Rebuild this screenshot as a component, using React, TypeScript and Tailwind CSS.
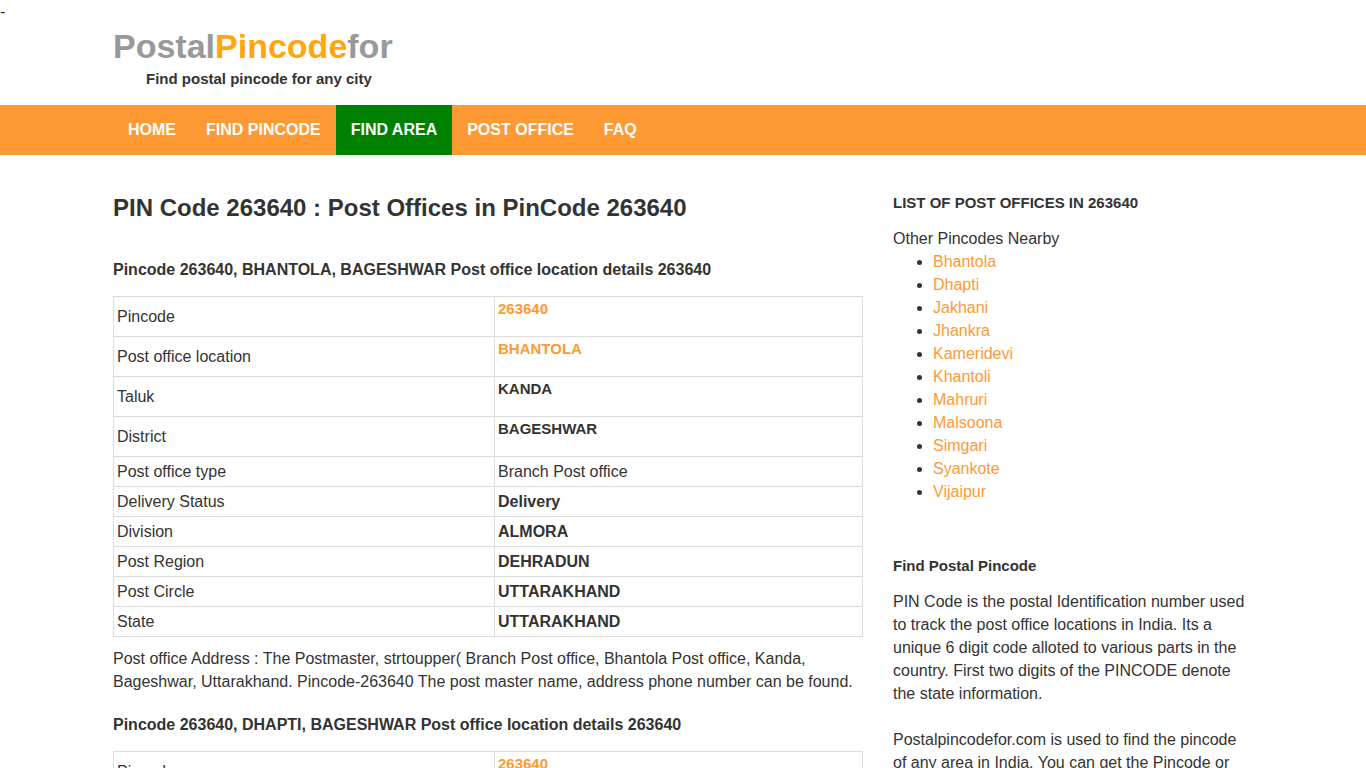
import React from 'react';

interface Row {
  label: string;
  value: string;
  kind: 'link' | 'heading' | 'plain' | 'bold';
}

interface Office {
  name: string;
  title: string;
}

const NAV = ['Home', 'Find Pincode', 'Find Area', 'Post Office', 'FAQ'];

const OFFICES: Office[] = [
  { name: 'BHANTOLA', title: 'Bhantola' },
  { name: 'DHAPTI', title: 'Dhapti' },
];

const NEARBY = [
  'Bhantola',
  'Dhapti',
  'Jakhani',
  'Jhankra',
  'Kameridevi',
  'Khantoli',
  'Mahruri',
  'Malsoona',
  'Simgari',
  'Syankote',
  'Vijaipur',
];

const rowsFor = (office: Office): Row[] => [
  { label: 'Pincode', value: '263640', kind: 'link' },
  { label: 'Post office location', value: office.name, kind: 'link' },
  { label: 'Taluk', value: 'KANDA', kind: 'heading' },
  { label: 'District', value: 'BAGESHWAR', kind: 'heading' },
  { label: 'Post office type', value: 'Branch Post office', kind: 'plain' },
  { label: 'Delivery Status', value: 'Delivery', kind: 'bold' },
  { label: 'Division', value: 'ALMORA', kind: 'bold' },
  { label: 'Post Region', value: 'DEHRADUN', kind: 'bold' },
  { label: 'Post Circle', value: 'UTTARAKHAND', kind: 'bold' },
  { label: 'State', value: 'UTTARAKHAND', kind: 'bold' },
];

const CellValue: React.FC<{ row: Row }> = ({ row }) => {
  if (row.kind === 'plain') return <>{row.value}</>;
  if (row.kind === 'bold') return <strong>{row.value}</strong>;
  return (
    <h5 className="mb-4 text-[15px] leading-[17px] font-bold">
      {row.kind === 'link' ? (
        <a href="#" className="text-[#ff9933]">{row.value}</a>
      ) : (
        row.value
      )}
    </h5>
  );
};

const OfficeDetails: React.FC<{ office: Office }> = ({ office }) => (
  <section className="mb-[22px]">
    <h2 className="mb-4 text-base leading-5 font-bold">
      Pincode 263640, {office.name}, BAGESHWAR Post office location details 263640
    </h2>
    <table className="w-full table-fixed border-collapse border border-[#dddddd]">
      <colgroup>
        <col className="w-[381px]" />
        <col />
      </colgroup>
      <tbody>
        {rowsFor(office).map((row) => (
          <tr key={row.label}>
            <th scope="row" className="border border-[#dddddd] p-[3px] text-left align-middle font-normal">
              {row.label}
            </th>
            <td className="border border-[#dddddd] p-[3px] align-middle">
              <CellValue row={row} />
            </td>
          </tr>
        ))}
      </tbody>
    </table>
    <p className="mt-[10px]">
      Post office Address : The Postmaster, strtoupper( Branch Post office, {office.title} Post office, Kanda,
      Bageshwar, Uttarakhand. Pincode-263640 The post master name, address phone number can be found.
    </p>
  </section>
);

const App: React.FC = () => {
  return (
    <div className="min-h-screen bg-white font-['Liberation_Sans',Arial,sans-serif] text-base leading-[23px] text-[#333333]">
      <div>-</div>

      {/* Logo */}
      <header className="mx-auto max-w-[1170px] px-[15px] pt-1 pb-[18px]">
        <a href="#" className="block text-[34px] leading-[39px] font-bold text-[#999999]">
          Postal<span className="text-[#ffa60d]">Pincode</span>for
        </a>
        <p className="pt-1 pl-[33px] text-[15px] leading-[17px] font-bold">Find postal pincode for any city</p>
      </header>

      {/* Navigation */}
      <nav className="bg-[#ff9933]">
        <ul className="mx-auto flex max-w-[1170px] flex-wrap px-[15px]">
          {NAV.map((item) => (
            <li key={item}>
              <a
                href="#"
                className={`block p-[15px] leading-5 font-bold text-white uppercase ${
                  item === 'Find Area' ? 'bg-[#008000]' : ''
                }`}
              >
                {item}
              </a>
            </li>
          ))}
        </ul>
      </nav>

      <div className="mx-auto grid max-w-[1170px] grid-cols-1 pt-[39px] md:grid-cols-3">
        <main className="px-[15px] md:col-span-2">
          <h1 className="mb-[38px] text-2xl leading-7 font-bold">PIN Code 263640 : Post Offices in PinCode 263640</h1>
          {OFFICES.map((office) => (
            <OfficeDetails key={office.name} office={office} />
          ))}
        </main>

        {/* Sidebar */}
        <aside className="px-[15px]">
          <h5 className="mb-4 text-[15px] leading-[17px] font-bold">LIST OF POST OFFICES IN 263640</h5>
          <p>Other Pincodes Nearby</p>
          <ul className="list-disc pl-10">
            {NEARBY.map((name) => (
              <li key={name}>
                <a href="#" className="text-[#ff9933]">{name}</a>
              </li>
            ))}
          </ul>

          <h5 className="mt-[54px] mb-4 text-[15px] leading-[17px] font-bold">Find Postal Pincode</h5>
          <p className="mb-[23px]">
            PIN Code is the postal Identification number used to track the post office locations in India. Its a
            unique 6 digit code alloted to various parts in the country. First two digits of the PINCODE denote the
            state information.
          </p>
          <p>Postalpincodefor.com is used to find the pincode of any area in India. You can get the Pincode or</p>
        </aside>
      </div>
    </div>
  );
};

export default App;
